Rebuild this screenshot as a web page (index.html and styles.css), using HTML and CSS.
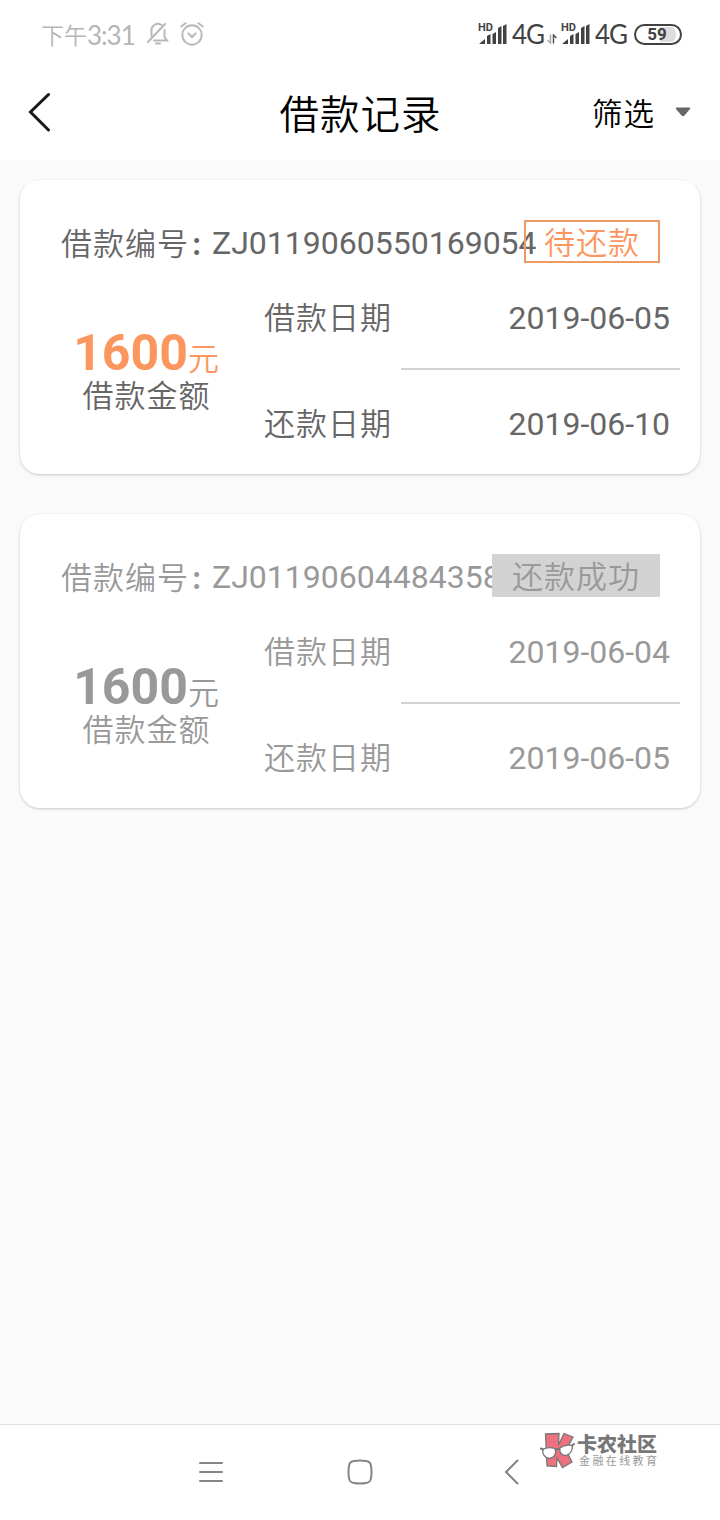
FILE: index.html
```html
<!DOCTYPE html>
<html lang="zh-CN">
<head>
    <meta charset="UTF-8">
    <meta name="viewport" content="width=device-width, initial-scale=1.0">
    <title>借款记录</title>
    <link rel="stylesheet" href="styles.css">
</head>
<body>
    <div class="status-bar">
        <div class="status-left">
            <span class="time-label">下午</span><span class="time">3:31</span>
            <svg class="icon-mute" width="24" height="24" viewBox="0 0 24 24">
                <path d="M5.500 14V9.500a6.500 6.500 0 0 1 10-6.500M18.500 8v7l2.500 3.500H8M2 20L19 2M10 21.500h4"/>
            </svg>
            <svg class="icon-alarm" width="24" height="24" viewBox="0 0 24 24">
                <circle cx="12" cy="13" r="9.700"/>
                <path d="M8.300 11.500l3.700 3.500 3.700-3.500M1.200 4.500L5.500 1.200M18.500 1.200l4.300 3.300"/>
            </svg>
        </div>
        <div class="status-right">
            <svg class="signal" width="30" height="24" viewBox="0 0 30 24">
                <text x="0" y="9">HD</text>
                <path d="M1 22l6-5v5zM9 14l3.500-2v10H9zM14.500 12l3.500-2v12h-3.500zM20 6l3.500-2v18H20zM25 4l3.500-2v20H25z"/>
            </svg>
            <span class="network">4G</span>
            <svg class="arrows" width="10" height="10" viewBox="0 0 10 10">
                <path class="down" d="M3.500 1v8L1 6.500"/>
                <path d="M6.500 9V1l2.500 2.500"/>
            </svg>
            <svg class="signal" width="30" height="24" viewBox="0 0 30 24">
                <text x="0" y="9">HD</text>
                <path d="M1 22l6-5v5zM9 14l3.500-2v10H9zM14.500 12l3.500-2v12h-3.500zM20 6l3.500-2v18H20zM25 4l3.500-2v20H25z"/>
            </svg>
            <span class="network">4G</span>
            <div class="battery"><span>59</span></div>
        </div>
    </div>

    <header class="title-bar">
        <svg class="back" width="24" height="40" viewBox="0 0 24 40">
            <path d="M20.500 2.500L2.500 20l18 18"/>
        </svg>
        <h1>借款记录</h1>
        <div class="filter">
            <span>筛选</span>
            <svg width="16" height="10" viewBox="0 0 16 10">
                <path d="M1.500.5h13q1.300.3.500 1.500L9.500 8.500q-1.500 1.400-3 0L1 2Q.2.800 1.500.500z"/>
            </svg>
        </div>
    </header>

    <main class="record-list">
        <section class="record-card pending">
            <div class="record-no">
                <span>借款编号</span><span class="colon">:</span><span class="num">ZJ0119060550169054</span>
                <div class="tag">待还款</div>
            </div>
            <div class="record-body">
                <div class="amount">
                    <div class="amount-value"><b>1600</b>元</div>
                    <div class="amount-label">借款金额</div>
                </div>
                <div class="dates">
                    <div class="date-row"><span>借款日期</span><span class="num">2019-06-05</span></div>
                    <div class="divider"></div>
                    <div class="date-row"><span>还款日期</span><span class="num">2019-06-10</span></div>
                </div>
            </div>
        </section>

        <section class="record-card done">
            <div class="record-no">
                <span>借款编号</span><span class="colon">:</span><span class="num">ZJ01190604484358</span>
                <div class="tag">还款成功</div>
            </div>
            <div class="record-body">
                <div class="amount">
                    <div class="amount-value"><b>1600</b>元</div>
                    <div class="amount-label">借款金额</div>
                </div>
                <div class="dates">
                    <div class="date-row"><span>借款日期</span><span class="num">2019-06-04</span></div>
                    <div class="divider"></div>
                    <div class="date-row"><span>还款日期</span><span class="num">2019-06-05</span></div>
                </div>
            </div>
        </section>
    </main>

    <nav class="nav-bar">
        <svg width="24" height="24" viewBox="0 0 24 24">
            <path d="M1 3h22M1 12h22M1 21h22"/>
        </svg>
        <svg width="26" height="26" viewBox="0 0 26 26">
            <path d="M7 2Q13 1 19 2Q23.500 2.500 24 7Q25 13 24 19Q23.500 23.500 19 24Q13 25 7 24Q2.500 23.500 2 19Q1 13 2 7Q2.500 2.500 7 2z"/>
        </svg>
        <svg width="16" height="26" viewBox="0 0 16 26">
            <path d="M13.500 1.500L2 13l11.500 11.500"/>
        </svg>
        <div class="watermark">
            <svg width="36" height="38" viewBox="0 0 36 38">
                <path class="mark" d="M5.500 2L19 1.500 18.500 13 24 1.500 33 5 26 18l6 12-9.500 5.500L17 26l-.5 8.500L7 34z"/>
                <path class="lens" d="M2.500 17.500Q9 14 15.500 17 17 25 9.500 26.500 2.500 25.500 2.500 17.500zM19.500 16q6-4 13-2.500 0 8-6.500 10-6.500 0-6.500-7.500z"/>
                <path class="bridge" d="M15.500 18q2-2 4-1M1 16.500l2 1M32 13.500l2-1.500"/>
            </svg>
            <div class="watermark-text">
                <strong>卡农社区</strong>
                <span>金融在线教育</span>
            </div>
        </div>
    </nav>
</body>
</html>
```
FILE: styles.css
```css
:root {
    --color-page: #fafafa;
    --color-text: #666;
    --color-muted: #999;
    --color-accent: #fb975e;
    --color-line: #d3d3d3;
    --color-status: #424242;
}

* {
    margin: 0;
    padding: 0;
    box-sizing: border-box;
}

body {
    display: flex;
    flex-direction: column;
    height: 100vh;
    font-family: 'Noto Sans CJK SC', sans-serif;
    font-size: 31px;
    font-weight: 350;
    letter-spacing: 1px;
    line-height: 42px;
    background: var(--color-page);
    color: var(--color-text);
    white-space: nowrap;
    overflow: hidden;
}

svg {
    display: block;
    flex: none;
    fill: none;
    stroke-linecap: round;
}

.num {
    font-family: Roboto, sans-serif;
    font-size: 32px;
    font-weight: 400;
    letter-spacing: 0;
}

/* status bar */
.status-bar {
    display: flex;
    justify-content: space-between;
    height: 68px;
    padding: 0 38px 0 41px;
    background: #fff;
    letter-spacing: 0;
}

.status-left,
.status-right {
    display: flex;
    align-items: center;
    height: 68px;
}

.status-left {
    color: #b5b5b5;
    font-size: 23px;
}

.status-left svg {
    stroke: #b9b9b9;
    stroke-width: 2;
}

.time {
    width: 48px;
    padding-top: 2px;
    font-family: Lato, sans-serif;
    font-size: 26px;
    font-weight: 400;
    letter-spacing: -1px;
}

.icon-mute {
    margin-left: 11px;
}

.icon-alarm {
    margin-left: 10px;
}

.status-right {
    color: var(--color-status);
}

.signal,
.arrows {
    fill: var(--color-status);
}

.signal {
    overflow: visible;
}

.signal text {
    font: 700 11px/12px Roboto, sans-serif;
}

.network {
    width: 33px;
    margin: 0 2px 0 4px;
    font-family: Lato, sans-serif;
    font-size: 26px;
    font-weight: 400;
    letter-spacing: -1px;
}

.arrows {
    margin: 10px 4px 0 0;
    fill: none;
    stroke: #555;
    stroke-width: 1.5;
}

.arrows .down {
    stroke: #aaa;
}

.battery {
    width: 48px;
    height: 21px;
    margin-left: 4px;
    border: 2px solid var(--color-status);
    border-radius: 11px;
    background: linear-gradient(90deg, #fff 58%, #ddd 58%) content-box;
    padding: 1px 4px 1px 2px;
    font: 700 17px/15px Roboto, sans-serif;
    text-align: center;
}

/* title bar */
.title-bar {
    display: grid;
    grid-template-columns: 1fr auto 1fr;
    align-items: center;
    height: 92px;
    padding: 0 29px 4px 28px;
    background: #fff;
    color: #000;
}

.back {
    stroke: #1c1712;
    stroke-width: 3;
}

.title-bar h1 {
    padding-left: 2px;
    font-size: 39.5px;
    font-weight: 350;
}

.filter {
    display: flex;
    justify-content: flex-end;
    align-items: center;
    gap: 20px;
    font-size: 30.5px;
}

.filter span {
    padding-bottom: 1px;
}

.filter svg {
    fill: #666;
}

/* records */
.record-list {
    flex: 1;
    padding: 20px;
}

.record-card {
    height: 294px;
    margin-bottom: 40px;
    padding-top: 40px;
    border-radius: 20px;
    background: #fff;
    box-shadow: 0 1px 3px rgba(0, 0, 0, 0.2);
}

.record-no {
    position: relative;
    display: flex;
    height: 43px;
    padding-left: 41px;
    line-height: 43px;
}

.record-no .num {
    padding-top: 2px;
}

.colon {
    width: 23px;
    padding-left: 3px;
    font-weight: 500;
}

.tag {
    position: absolute;
    top: 0;
    right: 40px;
    height: 43px;
    padding: 0 20px;
    line-height: 42px;
}

.pending .tag {
    border: 2px solid #ed9a65;
    padding: 0 18px;
    line-height: 38px;
    color: var(--color-accent);
}

.done {
    color: var(--color-muted);
}

.done .tag {
    background: var(--color-line);
}

.record-body {
    display: flex;
}

.amount {
    width: 243px;
    padding: 67px 0 0 10px;
    text-align: center;
}

.amount-value {
    height: 44px;
    line-height: 46px;
}

.amount-value b {
    font: 700 50px/46px Roboto, sans-serif;
    letter-spacing: 0;
}

.pending .amount-value {
    color: var(--color-accent);
}

.amount-label {
    line-height: 40px;
}

.dates {
    flex: 1;
    padding: 34px 20px 0 1px;
}

.date-row {
    display: flex;
    justify-content: space-between;
    height: 42px;
    padding-right: 10px;
    line-height: 38px;
}

.date-row .num {
    line-height: 42px;
}

.divider {
    height: 2px;
    margin: 29px 0 33px 137px;
    background: var(--color-line);
}

/* system navigation */
.nav-bar {
    position: relative;
    display: flex;
    align-items: center;
    height: 96px;
    padding: 0 0 2px 199px;
    border-top: 1px solid #e0e0e0;
    background: #fff;
    letter-spacing: 0;
}

.nav-bar > svg {
    stroke: #858585;
    stroke-width: 2;
}

.nav-bar > svg + svg {
    margin-left: 124px;
}

.nav-bar > svg + svg + svg {
    margin-left: 131px;
}

.watermark {
    position: absolute;
    top: 7px;
    left: 540px;
    display: flex;
}

.mark {
    fill: #ee7180;
    stroke: #777;
    stroke-width: 1.3;
}

.lens {
    fill: #fff;
    stroke: #777;
    stroke-width: 1.3;
}

.bridge {
    stroke: #777;
    stroke-width: 2;
}

.watermark-text {
    padding-left: 1px;
}

.watermark-text strong,
.watermark-text span {
    display: block;
}

.watermark-text strong {
    font-size: 20px;
    font-weight: 900;
    line-height: 23px;
    color: #777;
}

.watermark-text span {
    padding-left: 2px;
    font-size: 11px;
    font-weight: 400;
    line-height: 11px;
    letter-spacing: 2.4px;
    color: #999;
}
```
